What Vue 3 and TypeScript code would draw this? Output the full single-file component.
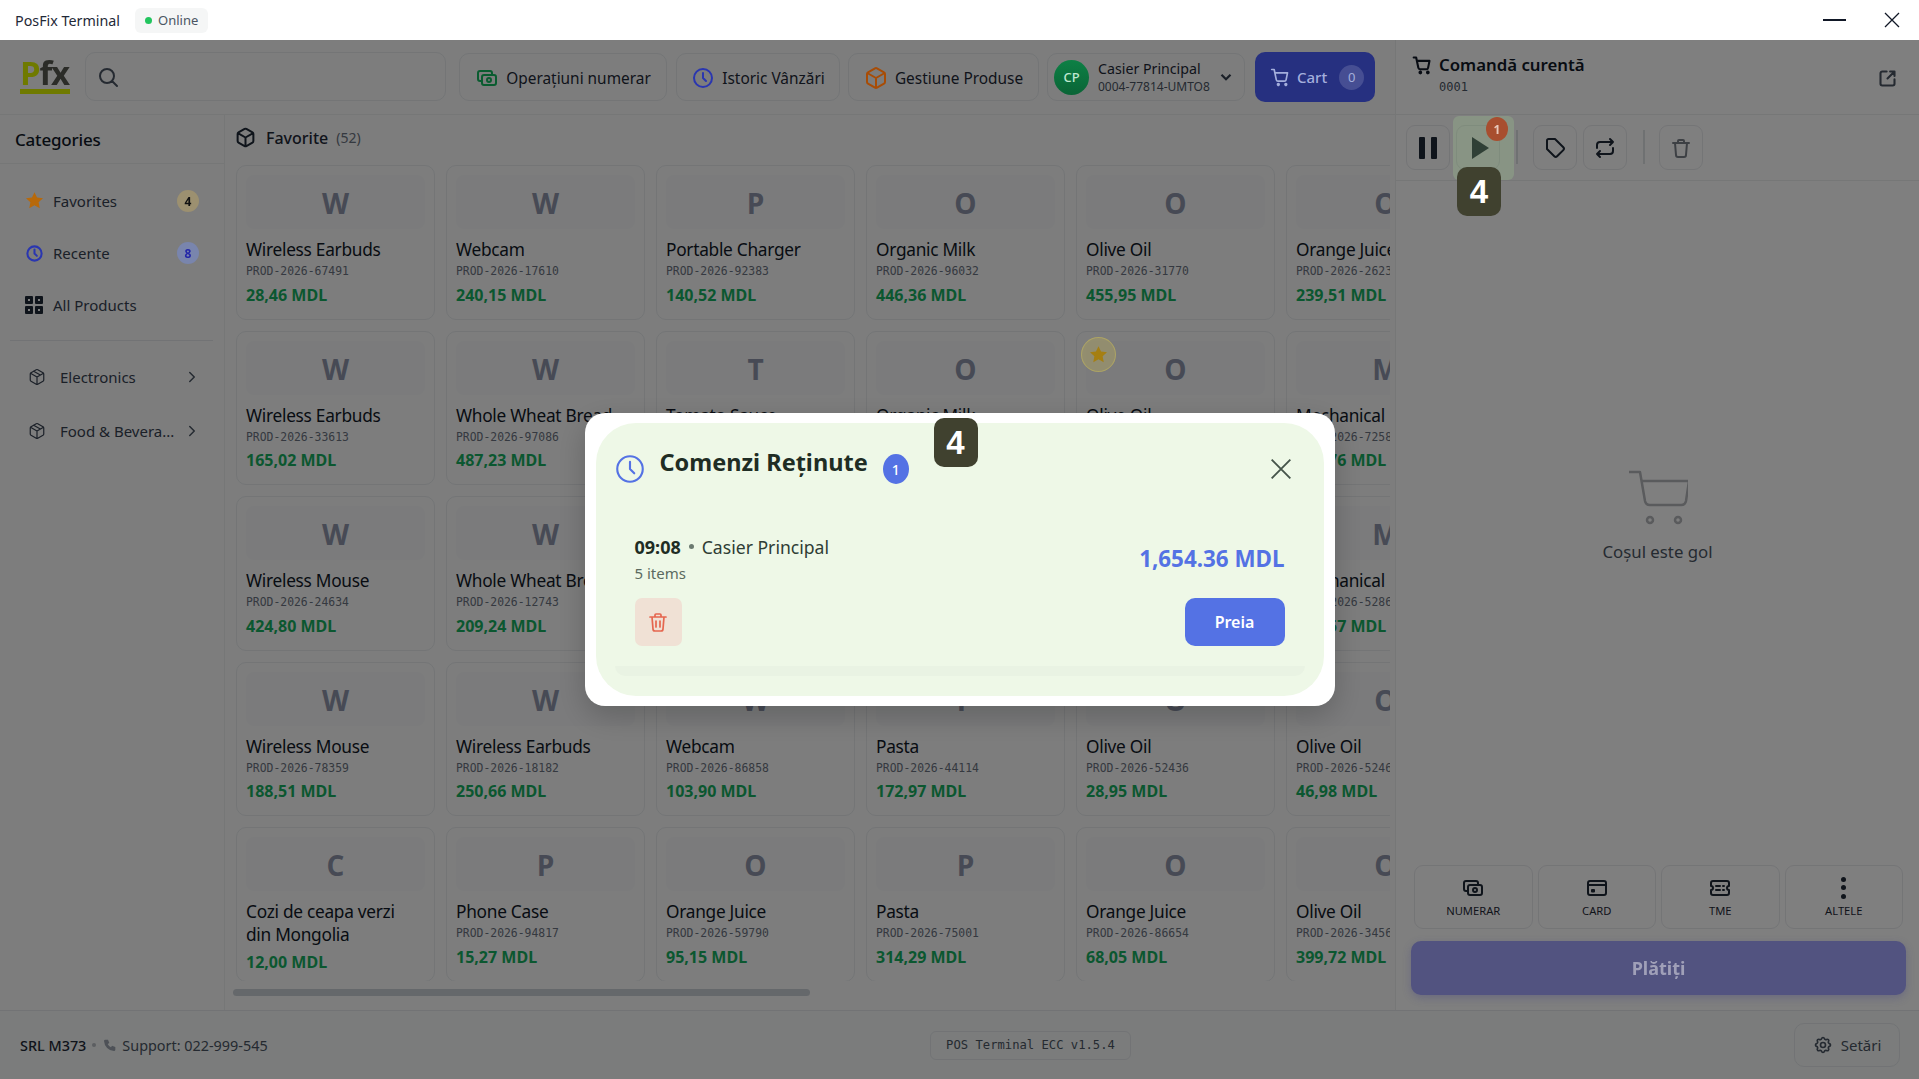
<script setup lang="ts">
interface Product {
  name: string
  code?: string
  price: string
  star?: boolean
}

const icons: Record<string, string> = {
  cash: 'M7 11a2 2 0 0 1 2-2h10a2 2 0 0 1 2 2v6a2 2 0 0 1-2 2H9a2 2 0 0 1-2-2zM12 14a2 2 0 1 0 4 0a2 2 0 1 0-4 0M17 9V7a2 2 0 0 0-2-2H5a2 2 0 0 0-2 2v6a2 2 0 0 0 2 2h2',
  clock: 'M12 3a9 9 0 1 0 0 18a9 9 0 1 0 0-18M12 7v5l3 3',
  box: 'M21 8a2 2 0 0 0-1-1.73l-7-4a2 2 0 0 0-2 0l-7 4A2 2 0 0 0 3 8v8a2 2 0 0 0 1 1.73l7 4a2 2 0 0 0 2 0l7-4A2 2 0 0 0 21 16ZM3.3 7 12 12l8.7-5M12 22V12',
  pack: 'M21 8a2 2 0 0 0-1-1.73l-7-4a2 2 0 0 0-2 0l-7 4A2 2 0 0 0 3 8v8a2 2 0 0 0 1 1.73l7 4a2 2 0 0 0 2 0l7-4A2 2 0 0 0 21 16ZM3.3 7 12 12l8.7-5M12 22V12M7.5 4.27l9 5.15',
  cart: 'M2 3h3l2.6 12.4a2 2 0 0 0 2 1.6h7.7a2 2 0 0 0 2-1.6L21 7H6M9 21a1 1 0 1 0 0-.01M18 21a1 1 0 1 0 0-.01',
  tag: 'M4 4.5A1.5 1.5 0 0 1 5.5 3H12l8.3 8.3a2 2 0 0 1 0 2.8l-6.2 6.2a2 2 0 0 1-2.8 0L4 13Z',
  repeat: 'M4 12V9a3 3 0 0 1 3-3h13M17 3l3 3l-3 3M20 12v3a3 3 0 0 1-3 3H4M7 21l-3-3l3-3',
  trash: 'M4 7h16M9 7V5a1 1 0 0 1 1-1h4a1 1 0 0 1 1 1v2M6 7l1 12a2 2 0 0 0 2 2h6a2 2 0 0 0 2-2l1-12',
  trashLines: 'M4 7h16M10 11v6M14 11v6M9 7V5a1 1 0 0 1 1-1h4a1 1 0 0 1 1 1v2M6 7l1 12a2 2 0 0 0 2 2h6a2 2 0 0 0 2-2l1-12',
  share: 'M11 4H6a2 2 0 0 0-2 2v12a2 2 0 0 0 2 2h12a2 2 0 0 0 2-2v-5M12 12l8-8M15 4h5v5',
  card: 'M5 5h14a2 2 0 0 1 2 2v10a2 2 0 0 1-2 2H5a2 2 0 0 1-2-2V7a2 2 0 0 1 2-2M3 9h18M7 14h2v1.5H7z',
  ticket: 'M5 5h14a2 2 0 0 1 2 2v3a2 2 0 0 0 0 4v3a2 2 0 0 1-2 2H5a2 2 0 0 1-2-2v-3a2 2 0 0 0 0-4V7a2 2 0 0 1 2-2M8 10h4M8 14h4M15 10h1M15 14h1',
  gear: 'M10.325 4.317c.426-1.756 2.924-1.756 3.35 0a1.724 1.724 0 0 0 2.573 1.066c1.543-.94 3.31.826 2.37 2.37a1.724 1.724 0 0 0 1.065 2.572c1.756.426 1.756 2.924 0 3.35a1.724 1.724 0 0 0-1.066 2.573c.94 1.543-.826 3.31-2.37 2.37a1.724 1.724 0 0 0-2.572 1.065c-.426 1.756-2.924 1.756-3.35 0a1.724 1.724 0 0 0-2.573-1.066c-1.543.94-3.31-.826-2.37-2.37a1.724 1.724 0 0 0-1.065-2.572c-1.756-.426-1.756-2.924 0-3.35a1.724 1.724 0 0 0 1.066-2.573c-.94-1.543.826-3.31 2.37-2.37c1 .608 2.296.07 2.572-1.065zM9 12a3 3 0 1 0 6 0a3 3 0 1 0-6 0',
  star: 'M12 2.5l2.9 6.2l6.8.8l-5 4.6l1.3 6.7l-6-3.3l-6 3.3l1.3-6.7l-5-4.6l6.8-.8z',
  phone: 'M5 4h4l2 5l-2.5 1.5a11 11 0 0 0 5 5l1.5-2.5l5 2v4a2 2 0 0 1-2 2a16 16 0 0 1-15-15a2 2 0 0 1 2-2',
  x: 'M5 5l14 14M19 5L5 19',
  right: 'M9 6l6 6l-6 6',
  down: 'M6 9l6 6l6-6',
  search: 'M11 4a7 7 0 1 0 0 14a7 7 0 1 0 0-14M21 21l-5-5',
}

const products: Product[] = [
  { name: 'Wireless Earbuds', code: 'PROD-2026-67491', price: '28,46 MDL' },
  { name: 'Webcam', code: 'PROD-2026-17610', price: '240,15 MDL' },
  { name: 'Portable Charger', code: 'PROD-2026-92383', price: '140,52 MDL' },
  { name: 'Organic Milk', code: 'PROD-2026-96032', price: '446,36 MDL' },
  { name: 'Olive Oil', code: 'PROD-2026-31770', price: '455,95 MDL' },
  { name: 'Orange Juice', code: 'PROD-2026-26231', price: '239,51 MDL' },
  { name: 'Wireless Earbuds', code: 'PROD-2026-33613', price: '165,02 MDL' },
  { name: 'Whole Wheat Bread', code: 'PROD-2026-97086', price: '487,23 MDL' },
  { name: 'Tomato Sauce', code: 'PROD-2026-40218', price: '64,10 MDL' },
  { name: 'Organic Milk', code: 'PROD-2026-51320', price: '122,40 MDL' },
  { name: 'Olive Oil', code: 'PROD-2026-70114', price: '96,80 MDL', star: true },
  { name: 'Mechanical Keyboard', code: 'PROD-2026-72581', price: '125,76 MDL' },
  { name: 'Wireless Mouse', code: 'PROD-2026-24634', price: '424,80 MDL' },
  { name: 'Whole Wheat Bread', code: 'PROD-2026-12743', price: '209,24 MDL' },
  { name: 'Tomato Sauce', code: 'PROD-2026-60842', price: '58,30 MDL' },
  { name: 'Organic Milk', code: 'PROD-2026-38107', price: '211,75 MDL' },
  { name: 'Olive Oil', code: 'PROD-2026-82690', price: '133,05 MDL' },
  { name: 'Mechanical Keyboard', code: 'PROD-2026-52861', price: '318,57 MDL' },
  { name: 'Wireless Mouse', code: 'PROD-2026-78359', price: '188,51 MDL' },
  { name: 'Wireless Earbuds', code: 'PROD-2026-18182', price: '250,66 MDL' },
  { name: 'Webcam', code: 'PROD-2026-86858', price: '103,90 MDL' },
  { name: 'Pasta', code: 'PROD-2026-44114', price: '172,97 MDL' },
  { name: 'Olive Oil', code: 'PROD-2026-52436', price: '28,95 MDL' },
  { name: 'Olive Oil', code: 'PROD-2026-52461', price: '46,98 MDL' },
  { name: 'Cozi de ceapa verzi din Mongolia', price: '12,00 MDL' },
  { name: 'Phone Case', code: 'PROD-2026-94817', price: '15,27 MDL' },
  { name: 'Orange Juice', code: 'PROD-2026-59790', price: '95,15 MDL' },
  { name: 'Pasta', code: 'PROD-2026-75001', price: '314,29 MDL' },
  { name: 'Orange Juice', code: 'PROD-2026-86654', price: '68,05 MDL' },
  { name: 'Olive Oil', code: 'PROD-2026-34561', price: '399,72 MDL' },
]

const payments = [
  { label: 'NUMERAR', icon: 'cash' },
  { label: 'CARD', icon: 'card' },
  { label: 'TME', icon: 'ticket' },
]
</script>

<template>
  <div class="app">
    <header class="titlebar">
      <span class="app-name">PosFix Terminal</span>
      <span class="online"><i class="online-dot"></i>Online</span>
      <span class="win-controls">
        <span class="win-min"></span>
        <svg class="win-close" viewBox="0 0 16 16"><path d="M1 1l14 14M15 1L1 15" /></svg>
      </span>
    </header>

    <div class="main">
      <div class="left">
        <div class="topbar">
          <div class="logo"><span class="logo-p">P</span>fx</div>
          <div class="search">
            <svg class="ic search-ic" viewBox="0 0 24 24"><path :d="icons.search" /></svg>
          </div>
          <button class="top-btn w-cash">
            <svg class="ic ic-green" viewBox="0 0 24 24"><path :d="icons.cash" /></svg>Operațiuni numerar
          </button>
          <button class="top-btn w-hist">
            <svg class="ic ic-blue" viewBox="0 0 24 24"><path :d="icons.clock" /></svg>Istoric Vânzări
          </button>
          <button class="top-btn w-prod">
            <svg class="ic ic-orange" viewBox="0 0 24 24"><path :d="icons.box" /></svg>Gestiune Produse
          </button>
          <div class="cashier">
            <span class="avatar">CP</span>
            <span class="cashier-text">
              <span class="cashier-name">Casier Principal</span>
              <span class="cashier-id">0004-77814-UMTO8</span>
            </span>
            <svg class="chev" viewBox="0 0 24 24"><path :d="icons.down" /></svg>
          </div>
          <button class="cart-btn">
            <svg class="ic" viewBox="0 0 24 24"><path :d="icons.cart" /></svg>Cart<span class="cart-count">0</span>
          </button>
        </div>

        <div class="body">
          <aside class="sidebar">
            <h2 class="side-title">Categories</h2>
            <nav class="side-list">
              <div class="side-item">
                <svg class="side-ic star-ic" viewBox="0 0 24 24"><path :d="icons.star" /></svg>
                <span class="side-label">Favorites</span>
                <span class="count count-amber">4</span>
              </div>
              <div class="side-item">
                <svg class="ic side-ic ic-blue thick" viewBox="0 0 24 24"><path :d="icons.clock" /></svg>
                <span class="side-label">Recente</span>
                <span class="count count-blue">8</span>
              </div>
              <div class="side-item">
                <span class="grid-ic"><i></i><i></i><i></i><i></i></span>
                <span class="side-label">All Products</span>
              </div>
            </nav>
            <div class="side-sep"></div>
            <div class="cat-item">
              <svg class="ic cat-ic" viewBox="0 0 24 24"><path :d="icons.pack" /></svg>
              <span class="cat-label">Electronics</span>
              <svg class="ic cat-arrow" viewBox="0 0 24 24"><path :d="icons.right" /></svg>
            </div>
            <div class="cat-item">
              <svg class="ic cat-ic" viewBox="0 0 24 24"><path :d="icons.pack" /></svg>
              <span class="cat-label">Food &amp; Bevera...</span>
              <svg class="ic cat-arrow" viewBox="0 0 24 24"><path :d="icons.right" /></svg>
            </div>
          </aside>

          <section class="products">
            <div class="prod-head">
              <svg class="ic prod-head-ic" viewBox="0 0 24 24"><path :d="icons.box" /></svg>
              <span class="prod-title">Favorite</span>
              <span class="prod-count">(52)</span>
            </div>
            <div class="grid">
              <article v-for="(p, i) in products" :key="i" class="card">
                <span v-if="p.star" class="star-badge">
                  <svg viewBox="0 0 24 24"><path :d="icons.star" /></svg>
                </span>
                <div class="thumb">{{ p.name[0] }}</div>
                <div class="p-name">{{ p.name }}</div>
                <div v-if="p.code" class="p-code">{{ p.code }}</div>
                <div class="p-price">{{ p.price }}</div>
              </article>
            </div>
            <div class="scroll-track"><div class="scroll-thumb"></div></div>
          </section>
        </div>
      </div>

      <aside class="order">
        <div class="order-head">
          <div>
            <div class="order-title">
              <svg class="ic" viewBox="0 0 24 24"><path :d="icons.cart" /></svg>Comandă curentă
            </div>
            <div class="order-no">0001</div>
          </div>
          <svg class="ic share" viewBox="0 0 24 24"><path :d="icons.share" /></svg>
        </div>

        <div class="order-tools">
          <button class="tool">
            <span class="pause"><i></i><i></i></span>
          </button>
          <div class="tool-hl">
            <button class="tool">
              <span class="play"></span>
            </button>
            <span class="hl-box"></span>
            <span class="hl-badge">1</span>
            <span class="step step-tool">4</span>
          </div>
          <span class="tool-sep"></span>
          <button class="tool">
            <svg class="ic" viewBox="0 0 24 24"><path :d="icons.tag" /></svg>
          </button>
          <button class="tool">
            <svg class="ic" viewBox="0 0 24 24"><path :d="icons.repeat" /></svg>
          </button>
          <span class="tool-sep sep2"></span>
          <button class="tool tool-off">
            <svg class="ic" viewBox="0 0 24 24"><path :d="icons.trash" /></svg>
          </button>
        </div>

        <div class="empty">
          <svg class="empty-ic" viewBox="0 0 60 56">
            <path d="M1 2h11l5 29a5 5 0 0 0 5 4h31a5 5 0 0 0 5-4l3-20H13" />
            <circle cx="22" cy="50" r="3" />
            <circle cx="50" cy="50" r="3" />
          </svg>
          <div class="empty-text">Coșul este gol</div>
        </div>

        <div class="pay-grid">
          <button v-for="m in payments" :key="m.label" class="pay">
            <svg class="ic" viewBox="0 0 24 24"><path :d="icons[m.icon]" /></svg>
            <span>{{ m.label }}</span>
          </button>
          <button class="pay">
            <span class="dots"><i></i><i></i><i></i></span>
            <span>ALTELE</span>
          </button>
        </div>
        <button class="pay-now">Plătiți</button>
      </aside>
    </div>

    <footer class="footer">
      <div class="foot-left">
        <strong>SRL M373</strong>
        <i class="foot-dot"></i>
        <svg class="phone" viewBox="0 0 24 24"><path :d="icons.phone" /></svg>
        <span>Support: 022-999-545</span>
      </div>
      <div class="version">POS Terminal ECC v1.5.4</div>
      <button class="settings">
        <svg class="ic" viewBox="0 0 24 24"><path :d="icons.gear" /></svg>Setări
      </button>
    </footer>

    <div class="overlay">
      <div class="modal">
        <span class="step step-modal">4</span>
        <div class="modal-inner">
          <div class="modal-head">
            <svg class="ic modal-clock" viewBox="0 0 24 24"><path :d="icons.clock" /></svg>
            <h3 class="modal-title">Comenzi Reținute</h3>
            <span class="modal-badge">1</span>
            <svg class="modal-x" viewBox="0 0 24 24"><path :d="icons.x" /></svg>
          </div>
          <div class="held">
            <div class="held-row">
              <div>
                <div class="held-who"><b>09:08</b><i class="held-dot"></i>Casier Principal</div>
                <div class="held-items">5 items</div>
              </div>
              <div class="held-total">1,654.36 MDL</div>
            </div>
            <div class="held-actions">
              <button class="held-del">
                <svg class="ic" viewBox="0 0 24 24"><path :d="icons.trashLines" /></svg>
              </button>
              <button class="held-take">Preia</button>
            </div>
          </div>
          <div class="held-strip"></div>
        </div>
      </div>
    </div>
  </div>
</template>

<style>
html,
body {
  margin: 0;
  overflow: hidden;
}
</style>

<style scoped>
* {
  box-sizing: border-box;
}
button {
  font-family: inherit;
  cursor: pointer;
}
.app {
  width: 1919px;
  height: 1079px;
  display: flex;
  flex-direction: column;
  font-family: 'Noto Sans', 'Open Sans', sans-serif;
  color: #111827;
  background: #fafbfb;
  overflow: hidden;
}
.ic {
  width: 24px;
  height: 24px;
  fill: none;
  stroke: currentColor;
  stroke-width: 2;
  stroke-linecap: round;
  stroke-linejoin: round;
  flex: none;
}
/* accents keep their colour through the dim layer */
.ic-green,
.ic-blue,
.ic-orange {
  position: relative;
  z-index: 11;
}
.ic-green {
  color: #0a5c30;
}
.ic-blue {
  color: #2a36b0;
}
.ic-orange {
  color: #a84c05;
}

.titlebar {
  height: 40px;
  background: #fff;
  display: flex;
  align-items: center;
  padding-left: 15px;
  font-size: 14.3px;
}
.app-name {
  color: #1f2937;
}
.online {
  margin-left: 15px;
  height: 25px;
  width: 73px;
  background: #f5f6f6;
  border-radius: 6px;
  display: flex;
  align-items: center;
  padding-left: 10px;
  font-size: 13px;
  color: #4b5563;
}
.online-dot {
  width: 7px;
  height: 7px;
  border-radius: 50%;
  background: #22c55e;
  margin-right: 6px;
}
.win-controls {
  margin-left: auto;
  display: flex;
  align-items: center;
  gap: 38px;
  padding-right: 19px;
}
.win-min {
  width: 23px;
  height: 2px;
  background: #111827;
}
.win-close {
  width: 16px;
  height: 16px;
  fill: none;
  stroke: #111827;
  stroke-width: 1.3;
}

.main {
  height: 970px;
  display: flex;
}
.left {
  width: 1395px;
  display: flex;
  flex-direction: column;
}
.topbar {
  height: 75px;
  padding: 12px 0 0 20px;
  border-bottom: 1px solid #eceeef;
  display: flex;
  align-items: flex-start;
}
.logo {
  width: 65px;
  height: 44px;
  font-size: 33px;
  line-height: 38px;
  font-weight: 700;
  font-family: 'Open Sans', sans-serif;
  color: #2b2c28;
  letter-spacing: -1.2px;
  position: relative;
  z-index: 11;
  margin-top: 2px;
}
.logo::after {
  content: '';
  position: absolute;
  left: 0;
  top: 35px;
  width: 50px;
  height: 5px;
  background: #6f7a00;
}
.logo-p {
  color: #6f7a00;
}
.search {
  width: 361px;
  height: 49px;
  border: 1px solid #e8eaed;
  border-radius: 10px;
  display: flex;
  align-items: center;
  padding-left: 10px;
}
.search-ic {
  color: #4b5563;
}
.top-btn {
  height: 48px;
  margin-top: 1px;
  background: transparent;
  border: 1px solid #e8eaed;
  border-radius: 10px;
  display: flex;
  align-items: center;
  justify-content: center;
  gap: 7px;
  font-size: 15.4px;
  color: #1f2937;
  padding: 2px 0 0;
}
.w-cash {
  width: 208px;
  margin-left: 13px;
}
.w-hist {
  width: 164px;
  margin-left: 9px;
}
.w-prod {
  width: 191px;
  margin-left: 8px;
}
.cashier {
  width: 198px;
  height: 48px;
  margin: 1px 0 0 8px;
  border: 1px solid #e8eaed;
  border-radius: 10px;
  display: flex;
  align-items: center;
  padding-left: 6px;
}
.avatar {
  position: relative;
  z-index: 11;
  width: 35px;
  height: 35px;
  border-radius: 50%;
  background: linear-gradient(#0d8045, #0a6436);
  color: #bfe8d0;
  font-size: 13px;
  font-weight: 500;
  display: flex;
  align-items: center;
  justify-content: center;
  flex: none;
}
.cashier-text {
  margin-left: 9px;
  display: flex;
  flex-direction: column;
  width: 113px;
}
.cashier-name {
  font-size: 14.2px;
  line-height: 18px;
  color: #1f2937;
  white-space: nowrap;
}
.cashier-id {
  font-size: 12px;
  line-height: 17px;
  color: #4b5563;
  white-space: nowrap;
}
.chev {
  width: 18px;
  height: 18px;
  margin-left: 6px;
  fill: none;
  stroke: #374151;
  stroke-width: 3;
}
.cart-btn {
  position: relative;
  z-index: 11;
  width: 120px;
  height: 50px;
  margin-left: 10px;
  background: #263080;
  border: 0;
  border-radius: 10px;
  color: #a4aedc;
  font-size: 15px;
  font-weight: 500;
  display: flex;
  align-items: center;
  padding: 0 0 0 15px;
  gap: 7px;
}
.cart-btn .ic {
  width: 20px;
  height: 20px;
}
.cart-count {
  width: 25px;
  height: 25px;
  margin-left: 5px;
  background: rgba(255, 255, 255, 0.15);
  border-radius: 50%;
  font-size: 13px;
  font-weight: 400;
  display: flex;
  align-items: center;
  justify-content: center;
}

.body {
  flex: 1;
  display: flex;
  min-height: 0;
}
.sidebar {
  width: 225px;
  border-right: 1px solid #eceeef;
  flex: none;
}
.side-title {
  height: 49px;
  margin: 0;
  padding: 0 15px;
  font-size: 17px;
  font-weight: 500;
  letter-spacing: -0.2px;
  line-height: 50px;
  color: #111827;
  border-bottom: 1px solid #eceeef;
}
.side-list {
  padding: 11px 0 0;
}
.side-item {
  height: 52px;
  display: flex;
  align-items: center;
  padding: 0 25px;
  font-size: 15px;
  color: #374151;
}
.side-ic {
  width: 19px;
  height: 19px;
  flex: none;
  margin-right: 9px;
}
.star-ic {
  position: relative;
  z-index: 11;
  width: 21px;
  height: 21px;
  margin: -2px 8px 0 -1px;
  fill: #b8690a;
}
.thick {
  stroke-width: 2.6;
}
.side-label {
  flex: 1;
}
.count {
  position: relative;
  z-index: 11;
  width: 22px;
  height: 22px;
  border-radius: 50%;
  font-size: 12px;
  font-weight: 700;
  display: flex;
  align-items: center;
  justify-content: center;
}
.count-amber {
  background: #9c9070;
  color: #111;
}
.count-blue {
  background: #7985ad;
  color: #2327a8;
}
.grid-ic {
  width: 18px;
  height: 18px;
  margin-right: 10px;
  display: grid;
  grid-template-columns: 1fr 1fr;
  gap: 2px;
}
.grid-ic i {
  border: 3px solid #1f2937;
  border-radius: 1px;
}
.side-sep {
  height: 1px;
  background: #e5e7eb;
  margin: 9px 11px 9px 10px;
}
.cat-item {
  height: 54px;
  display: flex;
  align-items: center;
  padding-left: 28px;
  font-size: 15px;
  color: #374151;
}
.cat-ic {
  width: 18px;
  height: 18px;
  stroke-width: 1.6;
}
.cat-label {
  margin-left: 14px;
  width: 119px;
  white-space: nowrap;
}
.cat-arrow {
  width: 18px;
  height: 18px;
  margin-left: 4px;
  color: #4b5563;
}

.products {
  width: 1170px;
  padding: 0 0 0 11px;
  display: flex;
  flex-direction: column;
}
.prod-head {
  height: 50px;
  padding-bottom: 5px;
  display: flex;
  align-items: center;
  font-size: 16px;
}
.prod-head-ic {
  width: 21px;
  height: 21px;
  margin-left: -1px;
  color: #1f2937;
  stroke-width: 2.3;
}
.prod-title {
  margin-left: 10px;
  font-weight: 500;
  color: #1f2937;
}
.prod-count {
  margin-left: 8px;
  font-size: 14px;
  color: #6b7280;
}
.grid {
  display: grid;
  grid-template-columns: repeat(6, 199px);
  grid-auto-rows: 154.5px;
  gap: 11px;
  width: 1154px;
  height: 816px;
  overflow: hidden;
}
.card {
  position: relative;
  border: 1px solid #e8eaed;
  border-radius: 10px;
  padding: 9px;
}
.star-badge {
  position: absolute;
  z-index: 11;
  left: 4px;
  top: 5px;
  width: 35px;
  height: 35px;
  border-radius: 50%;
  border: 1px solid rgba(200, 185, 90, 0.5);
  background: rgba(195, 180, 85, 0.32);
  display: flex;
  align-items: center;
  justify-content: center;
}
.star-badge svg {
  width: 21px;
  height: 21px;
  fill: #a57f12;
}
.thumb {
  height: 54px;
  padding-top: 2px;
  background: #f6f7f8;
  border-radius: 8px;
  font-family: 'Open Sans', sans-serif;
  font-size: 28px;
  font-weight: 700;
  color: #8e95aa;
  display: flex;
  align-items: center;
  justify-content: center;
}
.p-name {
  margin-top: 9px;
  padding-right: 4px;
  font-size: 17.3px;
  letter-spacing: -0.28px;
  line-height: 23px;
  color: #111827;
}
.p-code {
  font-family: 'DejaVu Sans Mono', monospace;
  font-size: 11.4px;
  line-height: 16px;
  margin-top: 2px;
  color: #6b7280;
  white-space: nowrap;
}
.p-price {
  font-size: 16px;
  line-height: 22px;
  font-weight: 700;
  color: #17ae60;
  margin-top: 4.5px;
  white-space: nowrap;
}
.scroll-track {
  height: 7px;
  margin: 8px 0 0 -3px;
}
.scroll-thumb {
  width: 577px;
  height: 100%;
  background: #cbd0d6;
  border-radius: 4px;
}

.order {
  width: 524px;
  border-left: 1px solid #eceeef;
  background: #fff;
  display: flex;
  flex-direction: column;
}
.order-head {
  height: 75px;
  padding: 13px 21px 0 17px;
  border-bottom: 1px solid #eceeef;
  display: flex;
  justify-content: space-between;
}
.order-title {
  display: flex;
  align-items: center;
  gap: 7px;
  font-size: 16.8px;
  font-weight: 600;
  color: #111827;
}
.order-title .ic {
  width: 20px;
  height: 20px;
  margin-left: -1px;
  stroke-width: 2.5;
}
.order-no {
  font-family: 'DejaVu Sans Mono', monospace;
  font-size: 12px;
  color: #4b5563;
  margin: 4px 0 0 26px;
}
.share {
  width: 21px;
  height: 21px;
  margin-top: 15px;
  color: #4b5563;
  stroke-width: 2.4;
}
.order-tools {
  height: 66px;
  padding: 10px 0 0 10px;
  border-bottom: 1px solid #eceeef;
  display: flex;
  align-items: flex-start;
  gap: 6px;
}
.tool {
  width: 44px;
  height: 45px;
  background: transparent;
  border: 1px solid #e8eaed;
  border-radius: 9px;
  color: #1f2937;
  display: flex;
  align-items: center;
  justify-content: center;
  padding: 0;
}
.tool-off {
  color: #7b8089;
  margin-left: 8px;
}
.pause {
  display: flex;
  gap: 6px;
}
.pause i {
  width: 6px;
  height: 22px;
  background: #1f2937;
  border-radius: 1px;
}
.play {
  width: 0;
  height: 0;
  border-left: 17px solid #1f2937;
  border-top: 11px solid transparent;
  border-bottom: 11px solid transparent;
  margin-left: 4px;
}
.tool-hl {
  position: relative;
}
.hl-box {
  position: absolute;
  z-index: 11;
  left: -3px;
  top: -9px;
  width: 61px;
  height: 64px;
  border-radius: 6px;
  background: rgba(170, 225, 150, 0.22);
}
.hl-badge {
  position: absolute;
  z-index: 12;
  left: 30px;
  top: -8px;
  width: 22px;
  height: 24px;
  border-radius: 50%;
  background: #a84e2f;
  color: #e8c8bb;
  font-size: 12px;
  font-weight: 700;
  display: flex;
  align-items: center;
  justify-content: center;
}
.step {
  position: absolute;
  z-index: 13;
  width: 44px;
  height: 49px;
  border-radius: 10px;
  background: #40412f;
  color: #fff;
  font-family: 'Liberation Sans', sans-serif;
  font-size: 33px;
  font-weight: 700;
  display: flex;
  align-items: center;
  justify-content: center;
}
.step-tool {
  left: 1px;
  top: 42px;
}
.step-modal {
  left: 349px;
  top: 5px;
}
.tool-sep {
  width: 2px;
  height: 34px;
  background: #dfe2e5;
  margin: 5px 9px 0 10px;
}
.sep2 {
  margin: 5px 0 0 10px;
}
.empty {
  flex: 1;
  display: flex;
  flex-direction: column;
  align-items: center;
  padding-top: 289px;
}
.empty-ic {
  width: 60px;
  height: 56px;
  fill: none;
  stroke: #b4b6ba;
  stroke-width: 2.5;
  stroke-linejoin: round;
}
.empty-text {
  margin-top: 14px;
  font-size: 16.8px;
  color: #4b5563;
}
.pay-grid {
  display: grid;
  grid-template-columns: repeat(4, 118.5px);
  gap: 5px;
  padding: 0 0 0 18px;
}
.pay {
  height: 64px;
  background: transparent;
  border: 1px solid #e8eaed;
  border-radius: 9px;
  display: flex;
  flex-direction: column;
  align-items: center;
  justify-content: center;
  gap: 3px;
  font-size: 11.2px;
  color: #1f2937;
  padding: 0 0 1px;
}
.dots {
  height: 24px;
  display: flex;
  flex-direction: column;
  justify-content: space-between;
  padding: 1px 0;
}
.dots i {
  width: 5px;
  height: 5px;
  border-radius: 50%;
  background: #1f2937;
}
.pay-now {
  position: relative;
  z-index: 11;
  width: 495px;
  height: 54px;
  margin: 12px 0 15px 15px;
  background: #525380;
  border: 0;
  border-radius: 10px;
  color: #a0a0b8;
  font-size: 18px;
  font-weight: 700;
  box-shadow: 0 3px 8px rgba(60, 60, 130, 0.3);
}

.footer {
  height: 69px;
  border-top: 1px solid #e5e7eb;
  background: #f6f9f8;
  display: flex;
  align-items: center;
  padding: 0 19px 0 20px;
  font-size: 14.4px;
}
.foot-left {
  display: flex;
  align-items: center;
  width: 910px;
  color: #4b5563;
}
.foot-left strong {
  font-weight: 500;
  color: #1f2937;
}
.foot-dot {
  width: 4px;
  height: 4px;
  background: #b8bcc2;
  border-radius: 50%;
  margin: 0 6px;
}
.phone {
  width: 16px;
  height: 16px;
  margin-right: 4px;
  fill: #9ca3af;
}
.version {
  width: 201px;
  height: 29px;
  border: 1px solid #e5e7eb;
  border-radius: 6px;
  font-family: 'DejaVu Sans Mono', monospace;
  font-size: 12.2px;
  display: flex;
  align-items: center;
  justify-content: center;
  color: #4b5563;
}
.settings {
  margin-left: auto;
  width: 106px;
  height: 44px;
  background: transparent;
  border: 1px solid #e5e7eb;
  border-radius: 10px;
  display: flex;
  align-items: center;
  justify-content: center;
  gap: 8px;
  font-size: 15px;
  color: #4b5563;
  padding: 0;
}
.settings .ic {
  width: 20px;
  height: 20px;
}

.overlay {
  position: fixed;
  z-index: 10;
  left: 0;
  top: 40px;
  width: 1919px;
  height: 1039px;
  background: rgba(0, 0, 0, 0.5);
  display: flex;
  align-items: center;
  justify-content: center;
}
.modal {
  position: relative;
  width: 750px;
  height: 293px;
  background: #fff;
  border-radius: 20px;
  padding: 10px 11px;
  box-shadow: 0 10px 30px rgba(0, 0, 0, 0.2);
}
.modal-inner {
  height: 100%;
  background: #eef8e7;
  border-radius: 40px;
  padding: 0 19px;
  display: flex;
  flex-direction: column;
}
.modal-head {
  height: 108px;
  display: flex;
  align-items: flex-start;
  padding-top: 27px;
  color: #1f2d24;
}
.modal-clock {
  width: 34px;
  height: 34px;
  margin: 2px 0 0 -2px;
  color: #5472e4;
  stroke-width: 1.5;
}
.modal-title {
  margin: -4px 0 0 13px;
  font-size: 23.5px;
  line-height: 32px;
  font-weight: 700;
  color: #1f2d24;
}
.modal-badge {
  width: 26px;
  height: 30px;
  margin: 4px 0 0 15px;
  background: #5472e4;
  color: #fff;
  border-radius: 50%;
  font-size: 14px;
  font-weight: 500;
  display: flex;
  align-items: center;
  justify-content: center;
}
.modal-x {
  width: 32px;
  height: 32px;
  margin: 3px 8px 0 auto;
  fill: none;
  stroke: #45544a;
  stroke-width: 1.4;
}
.held {
  padding: 0 20px;
}
.held-row {
  display: flex;
  justify-content: space-between;
  align-items: center;
  height: 55px;
}
.held-who {
  font-size: 17.6px;
  line-height: 28px;
  color: #2f3d34;
  display: flex;
  align-items: center;
}
.held-who b {
  font-size: 18px;
  font-weight: 700;
  color: #1f2d24;
}
.held-dot {
  width: 5px;
  height: 5px;
  background: #6b7a70;
  border-radius: 50%;
  margin: 0 8px;
}
.held-items {
  font-size: 15px;
  line-height: 24px;
  color: #5b6a60;
}
.held-total {
  font-size: 22.4px;
  font-weight: 700;
  color: #5472e4;
}
.held-actions {
  display: flex;
  justify-content: space-between;
  margin-top: 12px;
}
.held-del {
  width: 47px;
  height: 48px;
  background: #f0e1d5;
  border: 0;
  border-radius: 7px;
  color: #e5664f;
  display: flex;
  align-items: center;
  justify-content: center;
  padding: 0;
}
.held-del .ic {
  stroke-width: 1.7;
}
.held-take {
  width: 100px;
  height: 48px;
  background: #5472e4;
  border: 0;
  border-radius: 10px;
  color: #fff;
  font-size: 16px;
  font-weight: 600;
}
.held-strip {
  height: 10px;
  margin-top: 20px;
  background: #e9f3e3;
  border-radius: 0 0 12px 12px;
}
</style>
